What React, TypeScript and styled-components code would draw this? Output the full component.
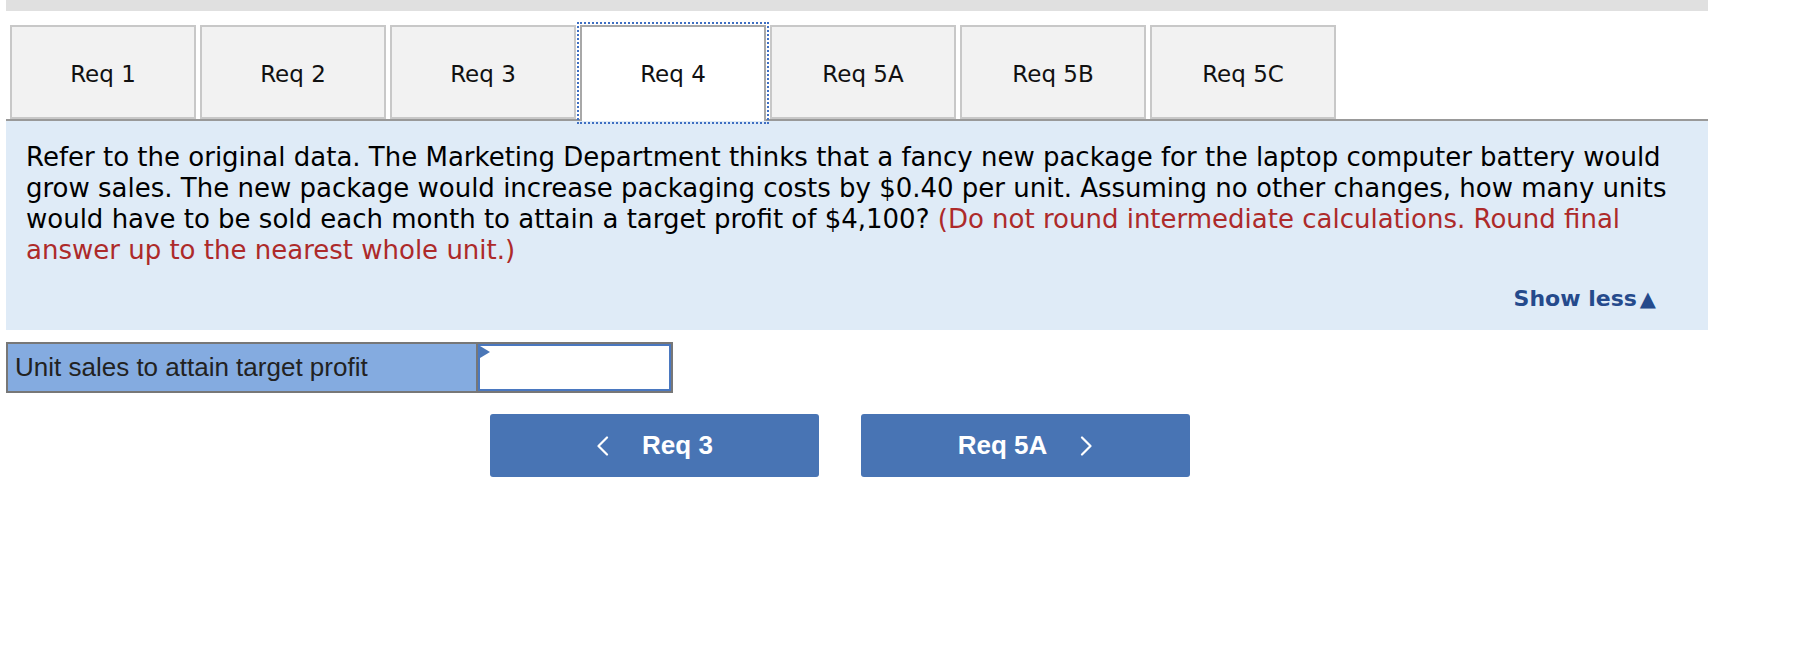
import React from "react";
import styled, { createGlobalStyle } from "styled-components";

const GlobalStyle = createGlobalStyle`
  html, body {
    margin: 0;
    padding: 0;
    background: #fff;
  }
  body {
    font-family: "DejaVu Sans", Verdana, sans-serif;
  }
`;

const tabs = ["Req 1", "Req 2", "Req 3", "Req 4", "Req 5A", "Req 5B", "Req 5C"];
const activeTab = "Req 4";

const ChevronLeft = () => (
  <svg width="13" height="20" viewBox="0 0 13 20" fill="none">
    <polyline
      points="11,1.5 2.5,10 11,18.5"
      stroke="#fff"
      strokeWidth="2.2"
      strokeLinecap="round"
      strokeLinejoin="round"
    />
  </svg>
);

const ChevronRight = () => (
  <svg width="13" height="20" viewBox="0 0 13 20" fill="none">
    <polyline
      points="2,1.5 10.5,10 2,18.5"
      stroke="#fff"
      strokeWidth="2.2"
      strokeLinecap="round"
      strokeLinejoin="round"
    />
  </svg>
);

export default function App() {
  return (
    <>
      <GlobalStyle />
      <Page>
        <TopBar />

        <TabBar>
          {tabs.map((t) => (
            <Tab key={t} $active={t === activeTab}>
              {t}
            </Tab>
          ))}
        </TabBar>

        <QuestionBox>
          <Question>
            Refer to the original data. The Marketing Department thinks that a
            fancy new package for the laptop computer battery would grow sales.
            The new package would increase packaging costs by $0.40 per unit.
            Assuming no other changes, how many units would have to be sold each
            month to attain a target profit of $4,100?{" "}
            <Hint>(Do not round intermediate calculations. Round final</Hint>{" "}
            <Hint>answer up to the nearest whole unit.)</Hint>
          </Question>
          <ShowLessRow>
            <ShowLess>
              Show less<Arrow>▲</Arrow>
            </ShowLess>
          </ShowLessRow>
        </QuestionBox>

        <AnswerRow>
          <LabelCell>Unit sales to attain target profit</LabelCell>
          <InputCell>
            <Flag />
            <AnswerInput type="text" />
          </InputCell>
        </AnswerRow>

        <NavRow>
          <NavButton>
            <ChevronLeft />
            <span>Req 3</span>
          </NavButton>
          <NavButton>
            <span>Req 5A</span>
            <ChevronRight />
          </NavButton>
        </NavRow>
      </Page>
    </>
  );
}

const Page = styled.div`
  width: 1702px;
  padding: 0 0 0 6px;
`;

const TopBar = styled.div`
  height: 11px;
  background-color: #e0e0e0;
`;

const TabBar = styled.div`
  display: flex;
  gap: 4px;
  padding: 14px 0 0 4px;
  border-bottom: 2px solid #999;
`;

const Tab = styled.button<{ $active?: boolean }>`
  box-sizing: border-box;
  width: 186px;
  height: ${(p) => (p.$active ? "96px" : "94px")};
  margin-bottom: ${(p) => (p.$active ? "-2px" : "0")};
  padding: ${(p) => (p.$active ? "2px 0 2px 0" : "3px 0 0 0")};
  border: 2px solid ${(p) => (p.$active ? "#a8a8a8" : "#c8c8c8")};
  border-bottom: ${(p) => (p.$active ? "none" : "2px solid #c8c8c8")};
  background-color: ${(p) => (p.$active ? "#fff" : "#f2f2f2")};
  outline: ${(p) => (p.$active ? "2px dotted #3f6fc2" : "none")};
  outline-offset: 1px;
  font-family: "DejaVu Sans", Verdana, sans-serif;
  font-size: 23px;
  color: #111;
  cursor: pointer;
  position: relative;
  z-index: ${(p) => (p.$active ? 1 : 0)};
`;

const QuestionBox = styled.div`
  background-color: #dfebf7;
  padding: 21px 20px 18px 20px;
`;

const Question = styled.p`
  margin: 0;
  font-size: 26px;
  line-height: 31px;
  color: #000;
`;

const Hint = styled.span`
  color: #ad2a2a;
`;

const ShowLessRow = styled.div`
  display: flex;
  justify-content: flex-end;
  margin-top: 20px;
  padding-right: 32px;
`;

const ShowLess = styled.a`
  font-size: 22px;
  line-height: 26px;
  font-weight: bold;
  color: #254a8c;
  cursor: pointer;
`;

const Arrow = styled.span`
  margin-left: 3px;
  font-size: 21px;
`;

const AnswerRow = styled.div`
  display: flex;
  width: fit-content;
  margin-top: 12px;
  border: 2px solid #777;
`;

const LabelCell = styled.div`
  box-sizing: border-box;
  width: 468px;
  height: 47px;
  display: flex;
  align-items: center;
  padding-left: 7px;
  background-color: #84abe0;
  font-family: "Liberation Sans", Arial, sans-serif;
  font-size: 26px;
  color: #222;
`;

const InputCell = styled.div`
  position: relative;
  border-left: 2px solid #777;
`;

const Flag = styled.div`
  position: absolute;
  top: 2px;
  left: 2px;
  width: 0;
  height: 0;
  border-top: 6px solid transparent;
  border-bottom: 6px solid transparent;
  border-left: 10px solid #4a76b6;
`;

const AnswerInput = styled.input`
  box-sizing: border-box;
  display: block;
  width: 193px;
  height: 47px;
  margin: 0;
  border: 2px solid #4a78c0;
  background: #fff;
  font-family: "Liberation Sans", Arial, sans-serif;
  font-size: 24px;
  outline: none;
`;

const NavRow = styled.div`
  display: flex;
  gap: 42px;
  margin-top: 21px;
  padding-left: 484px;
`;

const NavButton = styled.button`
  box-sizing: border-box;
  width: 329px;
  height: 63px;
  display: flex;
  align-items: center;
  justify-content: center;
  gap: 33px;
  border: none;
  border-radius: 3px;
  background-color: #4874b4;
  color: #fff;
  font-family: "Liberation Sans", Arial, sans-serif;
  font-size: 26px;
  font-weight: bold;
  cursor: pointer;

  svg {
    display: block;
  }
`;
